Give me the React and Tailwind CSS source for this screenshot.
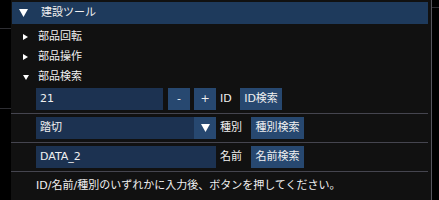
import React from 'react';

const font = { fontFamily: '"DejaVu Sans", "Noto Sans CJK JP", sans-serif' };

const Down = ({ w, h }) => (
  <svg width={w} height={h} viewBox={`0 0 ${w} ${h}`} className="block">
    <polygon points={`0,0 ${w},0 ${w / 2},${h}`} fill="#ffffff" />
  </svg>
);

const Right = ({ w, h }) => (
  <svg width={w} height={h} viewBox={`0 0 ${w} ${h}`} className="block">
    <polygon points={`0,0 ${w},${h / 2} 0,${h}`} fill="#ffffff" />
  </svg>
);

const Btn = ({ children, className = '' }) => (
  <div className={`h-[22px] flex items-center justify-center whitespace-nowrap bg-[#274870] ${className}`}>
    {children}
  </div>
);

const TreeItem = ({ open, label }) => (
  <div className="h-[20px] flex items-center pl-[12px]">
    <span className="w-[15px] flex">{open ? <Down w={6} h={5} /> : <Right w={5} h={6} />}</span>
    <span>{label}</span>
  </div>
);

const Separator = () => <div className="h-px bg-[#45454f] mr-[3px] my-[3px]" />;

export default function App() {
  return (
    <div
      className="w-[439px] h-[200px] flex bg-black text-[11px] text-[#f0f0f0] overflow-hidden"
      style={font}
    >
      {/* left neighbour window edge */}
      <div className="w-[11px] shrink-0 flex flex-col">
        <div className="h-[28px]" />
        <div className="h-px bg-[#2e2e33]" />
        <div className="h-[79px]" />
        <div className="h-px bg-[#2e2e33]" />
      </div>

      {/* main panel */}
      <div className="w-[421px] shrink-0 bg-[#111111] border-r border-[#55555c] flex flex-col pt-[2px]">
        <div className="h-[22px] ml-px mr-[3px] bg-[#1e3a5c] flex items-center pl-[7px]">
          <span className="w-[22px] flex">
            <Down w={9} h={8} />
          </span>
          <span>建設ツール</span>
        </div>

        <div className="pt-[3px]">
          <TreeItem label="部品回転" />
          <TreeItem label="部品操作" />
          <TreeItem open label="部品検索" />
        </div>

        <div className="pl-[25px] pt-px">
          <div className="flex items-center h-[22px] gap-[5px]">
            <div className="w-[127px] h-full bg-[#1c3251] flex items-center pl-[4px]">21</div>
            <Btn className="w-[22px]">-</Btn>
            <Btn className="w-[22px] -ml-px">+</Btn>
            <span className="-ml-px w-[15px]">ID</span>
            <Btn className="w-[42px]">ID検索</Btn>
          </div>
        </div>
        <Separator />
        <div className="pl-[25px]">
          <div className="flex items-center h-[22px]">
            <div className="w-[158px] h-full bg-[#1c3251] flex items-center pl-[4px]">踏切</div>
            <Btn className="w-[22px]">
              <Down w={9} h={8} />
            </Btn>
            <span className="ml-[4px] w-[31px]">種別</span>
            <Btn className="w-[53px]">種別検索</Btn>
          </div>
        </div>
        <Separator />
        <div className="pl-[25px]">
          <div className="flex items-center h-[22px]">
            <div className="w-[180px] h-full bg-[#1c3251] flex items-center pl-[4px]">DATA_2</div>
            <span className="ml-[4px] w-[31px]">名前</span>
            <Btn className="w-[53px]">名前検索</Btn>
          </div>
        </div>
        <Separator />
        <div className="pl-[25px] h-[22px] flex items-center whitespace-nowrap">
          ID/名前/種別のいずれかに入力後、ボタンを押してください。
        </div>
      </div>

      {/* right neighbour */}
      <div className="flex-1 flex flex-col">
        <div className="h-[7px]" />
        <div className="h-px bg-[#2e2e33]" />
      </div>
    </div>
  );
}
